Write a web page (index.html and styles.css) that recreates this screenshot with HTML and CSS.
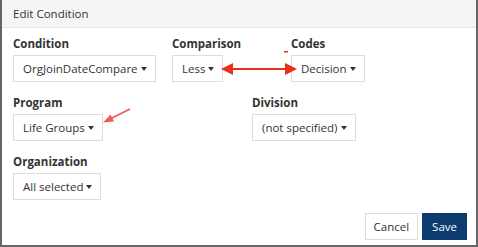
FILE: index.html
```html
<!DOCTYPE html>
<html>
<head>
<meta charset="utf-8">
<link rel="stylesheet" href="styles.css">
</head>
<body>
<div class="dialog">
  <div class="hdr">Edit Condition</div>
  <div class="body">
    <div class="row">
      <div class="field c1"><label class="lbl">Condition</label><button class="dd">OrgJoinDateCompare<span class="caret"></span></button></div>
      <div class="field c2"><label class="lbl">Comparison</label><button class="dd">Less<span class="caret"></span></button></div>
      <div class="field"><label class="lbl">Codes</label><button class="dd">Decision<span class="caret"></span></button></div>
    </div>
    <div class="row">
      <div class="field half"><label class="lbl">Program</label><button class="dd">Life Groups<span class="caret"></span></button></div>
      <div class="field"><label class="lbl">Division</label><button class="dd">(not specified)<span class="caret"></span></button></div>
    </div>
    <div class="row">
      <div class="field"><label class="lbl">Organization</label><button class="dd">All selected<span class="caret"></span></button></div>
    </div>
  </div>
  <div class="ftr">
    <button class="btn">Cancel</button>
    <button class="btn primary">Save</button>
  </div>
  <svg class="anno" width="478" height="247" viewBox="0 0 478 247">
    <rect x="284" y="51" width="4" height="1.5" fill="#f0301c"/>
    <line x1="230" y1="69" x2="288" y2="69" stroke="#e8301c" stroke-width="2"/>
    <polygon points="221,69 233,63 233,75" fill="#e8301c"/>
    <polygon points="297,69 285,63 285,75" fill="#e8301c"/>
    <line x1="130" y1="109" x2="110" y2="119" stroke="#ee5d52" stroke-width="1.6"/>
    <polygon points="103,122.5 110.5,114.5 114,121.5" fill="#ee5d52"/>
  </svg>
</div>
</body>
</html>
```
FILE: styles.css
```css
* { box-sizing: border-box; }
html, body { margin: 0; padding: 0; background: #fff; }
body {
  font-family: "Open Sans", "Liberation Sans", sans-serif;
  color: #333;
  width: 478px;
  height: 247px;
  overflow: hidden;
}
.dialog {
  position: relative;
  width: 478px;
  height: 247px;
  border-left: 2px solid #666;
  border-right: 2px solid #666;
  border-bottom: 2px solid #666;
  display: flex;
  flex-direction: column;
}
.hdr {
  height: 28px;
  background: #f5f5f5;
  border-bottom: 1px solid #e6e6e6;
  font-size: 11.5px;
  line-height: 27px;
  padding-left: 11px;
}
.body {
  padding: 7px 0 0 11px;
}
.row {
  display: flex;
  margin-bottom: 12px;
}
.row:last-child { margin-bottom: 0; }
.field { display: flex; flex-direction: column; align-items: flex-start; }
.c1 { width: 159px; }
.c2 { width: 119px; }
.half { width: 239px; }
.lbl {
  font-weight: 700;
  font-size: 11.5px;
  line-height: 18px;
  margin-bottom: 2px;
}
.dd {
  height: 27px;
  border: 1px solid #ddd;
  background: #fff;
  font-family: inherit;
  font-size: 11.5px;
  color: #333;
  padding: 0 8px 0 9px;
  display: flex;
  align-items: center;
  white-space: nowrap;
}
.caret {
  display: inline-block;
  width: 0;
  height: 0;
  border-left: 3.5px solid transparent;
  border-right: 3.5px solid transparent;
  border-top: 4px solid #333;
  margin-left: 3px;
}
.ftr {
  display: flex;
  justify-content: flex-end;
  gap: 4px;
  padding: 13px 9px 0 0;
}
.btn {
  height: 27px;
  border: 1px solid #ddd;
  background: #fff;
  font-family: inherit;
  font-size: 11.5px;
  color: #333;
  padding: 0 8px;
}
.btn.primary {
  background: #0b3b6f;
  border-color: #0b3b6f;
  color: #fff;
  padding: 0 9px;
}
.anno {
  position: absolute;
  left: -2px;
  top: 0;
  pointer-events: none;
}
```
